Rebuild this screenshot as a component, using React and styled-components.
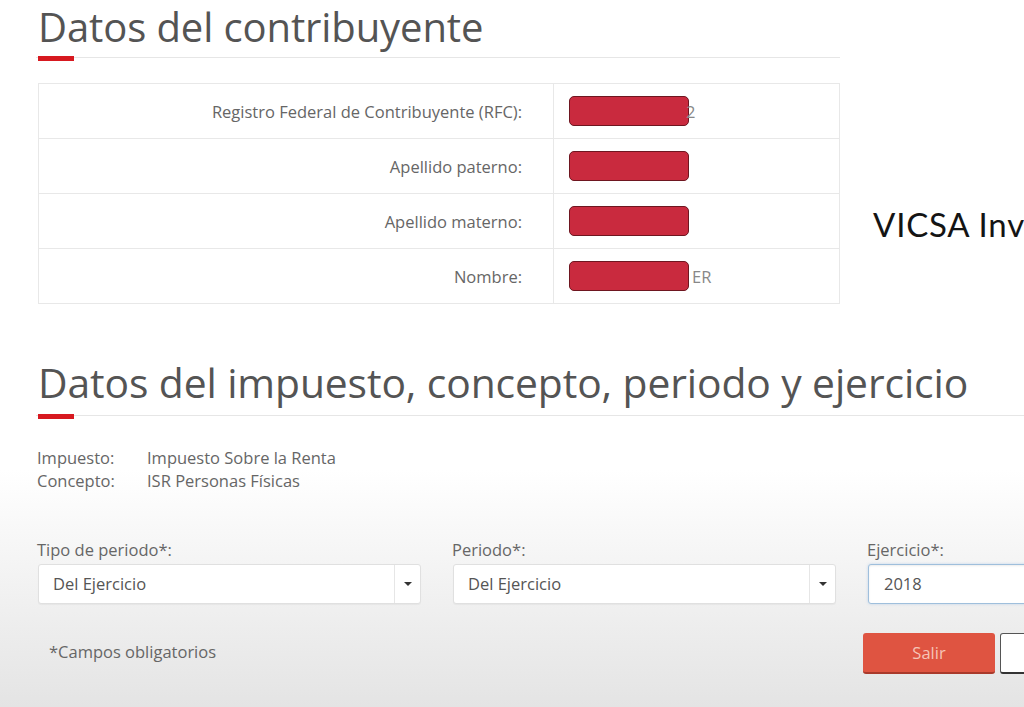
import React from "react";
import styled, { createGlobalStyle } from "styled-components";

const GlobalStyle = createGlobalStyle`
  html, body {
    margin: 0;
    padding: 0;
    overflow: hidden;
  }
  body {
    font-family: "Open Sans", "Noto Sans", sans-serif;
    background: linear-gradient(to bottom, #fff 0, #fff 470px, #e4e4e4 707px);
    min-height: 707px;
  }
`;

const Page = styled.div`
  position: relative;
  width: 1260px;
  height: 707px;
  padding: 0 0 0 38px;
  box-sizing: border-box;
`;

const Section = styled.section`
  width: ${(p) => p.width}px;
`;

const Title = styled.h1`
  margin: 0;
  padding-top: ${(p) => p.top}px;
  font-size: ${(p) => p.size}px;
  font-weight: 400;
  color: #545454;
  line-height: 1.2;
  letter-spacing: -0.1px;
`;

const Rule = styled.div`
  position: relative;
  height: 1px;
  background: #e6e6e6;
  margin-top: ${(p) => p.gap}px;
  margin-left: -2px;

  &::after {
    content: "";
    position: absolute;
    left: 2px;
    top: -1px;
    width: 36px;
    height: 5px;
    background: #d71920;
  }
`;

const Table = styled.div`
  margin-top: 25px;
  width: 800px;
  border: 1px solid #e8e8e8;
`;

const Row = styled.div`
  display: grid;
  grid-template-columns: 515px 1fr;
  height: 54px;
  border-top: ${(p) => (p.first ? "none" : "1px solid #e8e8e8")};
`;

const Label = styled.div`
  display: flex;
  align-items: center;
  justify-content: flex-end;
  padding-right: 31px;
  font-size: 16.5px;
  color: #666;
  border-right: 1px solid #e8e8e8;
`;

const Value = styled.div`
  display: flex;
  align-items: center;
  padding-left: 15px;
  font-size: 16.5px;
  color: #888;
`;

const Redact = styled.span`
  display: inline-block;
  width: 120px;
  height: 30px;
  border-radius: 5px;
  background: #c92a3e;
  border: 1px solid #6e1620;
  box-sizing: border-box;
`;

const Tail = styled.span`
  margin-left: ${(p) => p.shift}px;
`;

const Watermark = styled.div`
  position: absolute;
  left: 873px;
  top: 204px;
  font-family: "Lato", "DejaVu Sans", sans-serif;
  font-size: 33px;
  color: #141414;
  letter-spacing: 0.8px;
  white-space: nowrap;
`;

const Info = styled.div`
  margin-top: 30px;
  margin-left: -1px;
  display: grid;
  grid-template-columns: 110px auto;
  font-size: 16.5px;
  line-height: 23px;
  color: #666;
`;

const Fields = styled.div`
  margin-top: 47px;
  display: grid;
  grid-template-columns: repeat(3, 383px);
  column-gap: 32px;
`;

const Field = styled.div`
  display: flex;
  flex-direction: column;
`;

const FieldLabel = styled.label`
  font-size: 16.5px;
  color: #666;
  line-height: 22px;
  margin-left: -1px;
  margin-bottom: 3px;
`;

const Select = styled.div`
  display: flex;
  height: 40px;
  box-sizing: border-box;
  border: 1px solid #e0e0e0;
  border-radius: 3px;
  background: #fff;
  font-size: 16.5px;
  color: #555;
  box-shadow: 0 1px 1px rgba(0, 0, 0, 0.04);
`;

const SelectText = styled.div`
  flex: 1;
  display: flex;
  align-items: center;
  padding-left: 14px;
`;

const Caret = styled.div`
  width: 25px;
  border-left: 1px solid #e6e6e6;
  display: flex;
  align-items: center;
  justify-content: center;

  &::before {
    content: "";
    border-left: 4px solid transparent;
    border-right: 4px solid transparent;
    border-top: 4px solid #333;
  }
`;

const Input = styled.div`
  height: 40px;
  box-sizing: border-box;
  border: 1px solid #9fbfdc;
  border-radius: 3px;
  background: #fff;
  padding-left: 15px;
  display: flex;
  align-items: center;
  font-size: 16.5px;
  color: #555;
  box-shadow: inset 0 1px 2px rgba(0, 0, 0, 0.08), 0 0 3px rgba(102, 160, 220, 0.35);
`;

const Footer = styled.div`
  margin-top: 29px;
  display: flex;
  align-items: center;
`;

const Note = styled.div`
  width: 825px;
  padding-left: 11px;
  box-sizing: border-box;
  margin-top: -4px;
  font-size: 16.5px;
  color: #666;
`;

const Button = styled.button`
  width: 132px;
  height: 41px;
  margin-right: 5px;
  box-sizing: border-box;
  border-radius: 3px;
  font-family: inherit;
  font-size: 16.5px;
  border: ${(p) => (p.primary ? "none" : "1px solid #555")};
  border-bottom: 2px solid ${(p) => (p.primary ? "#a93a2b" : "#333")};
  background: ${(p) => (p.primary ? "#df5441" : "#fff")};
  color: ${(p) => (p.primary ? "#f6c4b6" : "#333")};
`;

const Actions = styled.div`
  display: flex;
`;

const rows = [
  { label: "Registro Federal de Contribuyente (RFC):", tail: "2", shift: -3 },
  { label: "Apellido paterno:" },
  { label: "Apellido materno:" },
  { label: "Nombre:", tail: "ER", shift: 3 },
];

function App() {
  return (
    <>
      <GlobalStyle />
      <Page>
        <Section width={802}>
          <Title size={40} top={3}>Datos del contribuyente</Title>
          <Rule gap={6} />
          <Table>
            {rows.map((r, i) => (
              <Row key={r.label} first={i === 0}>
                <Label>{r.label}</Label>
                <Value>
                  <Redact />
                  {r.tail && <Tail shift={r.shift}>{r.tail}</Tail>}
                </Value>
              </Row>
            ))}
          </Table>
        </Section>

        <Watermark>VICSA Inv</Watermark>

        <Section width={1000}>
          <Title size={40.8} top={54}>Datos del impuesto, concepto, periodo y ejercicio</Title>
          <Rule gap={8} />
          <Info>
            <span>Impuesto:</span>
            <span>Impuesto Sobre la Renta</span>
            <span>Concepto:</span>
            <span>ISR Personas Físicas</span>
          </Info>
        </Section>

        <Fields>
          <Field>
            <FieldLabel>Tipo de periodo*:</FieldLabel>
            <Select>
              <SelectText>Del Ejercicio</SelectText>
              <Caret />
            </Select>
          </Field>
          <Field>
            <FieldLabel>Periodo*:</FieldLabel>
            <Select>
              <SelectText>Del Ejercicio</SelectText>
              <Caret />
            </Select>
          </Field>
          <Field>
            <FieldLabel>Ejercicio*:</FieldLabel>
            <Input>2018</Input>
          </Field>
        </Fields>

        <Footer>
          <Note>*Campos obligatorios</Note>
          <Actions>
            <Button primary>Salir</Button>
            <Button aria-label="Siguiente" />
          </Actions>
        </Footer>
      </Page>
    </>
  );
}

export default App;
